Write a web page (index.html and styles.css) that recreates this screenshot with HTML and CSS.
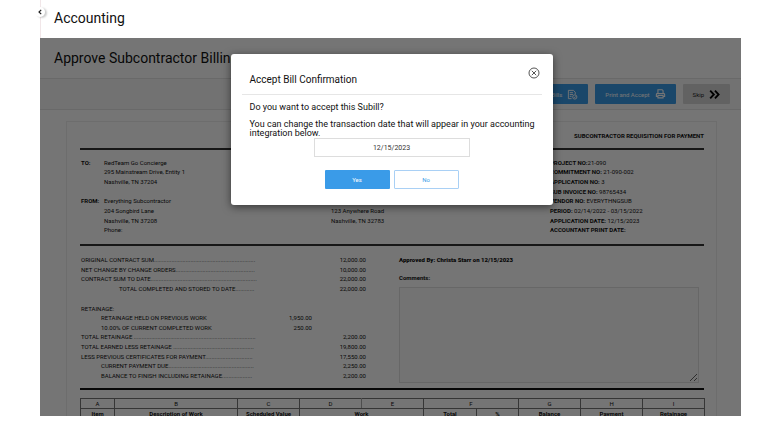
FILE: index.html
```html
<!DOCTYPE html>
<html lang="en">
<head>
<meta charset="utf-8">
<title>Accounting</title>
<link rel="stylesheet" href="styles.css">
</head>
<body>
<div class="app">
  <header class="topbar">
    <button class="collapse" aria-label="Collapse menu">
      <svg viewBox="0 0 10 10"><path d="M6.200 2.800 4 5l2.200 2.200" fill="none" stroke="#222" stroke-width="1.200"/></svg>
    </button>
    <h1>Accounting</h1>
  </header>
  <main class="page">
    <h2 class="page-title">Approve Subcontractor Billing</h2>
    <div class="toolbar">
      <button class="btn btn-primary">Bills
        <svg class="icon" viewBox="0 0 12 12" fill="none" stroke="currentColor" stroke-width="1"><path d="M5 10.500H1.500v-9h5.500l2 2V6M3 4h3.500M3 6h3.500M3 8h2"/><circle cx="8.500" cy="8.700" r="2.300"/><path d="m7.500 8.700.8.8 1.300-1.500"/></svg>
      </button>
      <button class="btn btn-primary">Print and Accept
        <svg class="icon" viewBox="0 0 12 12" fill="none" stroke="currentColor" stroke-width="1.200"><path d="M3.200 5V.8h4.600l1 1V5M3 8.200H1.500V5.900c0-.6.4-1 1-1h7c.6 0 1 .4 1 1v2.300H9M3.200 7h5.600v2.700H3.200z"/></svg>
      </button>
      <button class="btn btn-skip">Skip
        <svg class="icon" viewBox="0 0 12 12" fill="none" stroke="#000" stroke-width="2"><path d="m1.300 1.800 4 4.200-4 4.200M6.500 1.800l4 4.200-4 4.200"/></svg>
      </button>
    </div>
    <article class="sheet">
      <h3 class="sheet-title">SUBCONTRACTOR REQUISITION FOR PAYMENT</h3>
      <section class="parties">
        <div class="contacts">
          <div class="contact">
            <b>TO:</b><span>RedTeam Go Concierge</span>
            <span>295 Mainstream Drive, Entity 1</span>
            <span>Nashville, TN 37204</span>
          </div>
          <div class="contact">
            <b>FROM:</b><span>Everything Subcontractor</span>
            <span>204 Songbird Lane</span>
            <span>Nashville, TN 37208</span>
            <span>Phone:</span>
          </div>
        </div>
        <div class="rows">
          <span class="street">123 Anywhere Road</span>
          <span class="city">Nashville, TN 32783</span>
        </div>
        <div class="rows">
          <span><b>PROJECT NO:</b>21-090</span>
          <span><b>COMMITMENT NO:</b> 21-090-002</span>
          <span><b>APPLICATION NO:</b> 3</span>
          <span><b>SUB INVOICE NO:</b> 98765434</span>
          <span><b>VENDOR NO:</b> EVERYTHNGSUB</span>
          <span><b>PERIOD:</b> 02/14/2022 - 03/15/2022</span>
          <span><b>APPLICATION DATE:</b> 12/15/2023</span>
          <span><b>ACCOUNTANT PRINT DATE:</b></span>
        </div>
      </section>
      <section class="summary">
        <div class="totals">
          <span>ORIGINAL CONTRACT SUM................................................................</span><span class="sum">12,000.00</span>
          <span>NET CHANGE BY CHANGE ORDERS..................................................</span><span class="sum">10,000.00</span>
          <span>CONTRACT SUM TO DATE...................................................................</span><span class="sum">22,000.00</span>
          <span class="indent-2">TOTAL COMPLETED AND STORED TO DATE............</span><span class="sum">22,000.00</span>
          <span class="heading">RETAINAGE:</span>
          <span class="indent">RETAINAGE HELD ON PREVIOUS WORK</span><span class="part">1,950.00</span>
          <span class="indent">10.00% OF CURRENT COMPLETED WORK</span><span class="part">250.00</span>
          <span>TOTAL RETAINAGE .............................................................................</span><span class="sum">2,200.00</span>
          <span>TOTAL EARNED LESS RETAINAGE ...................................................</span><span class="sum">19,800.00</span>
          <span>LESS PREVIOUS CERTIFICATES FOR PAYMENT..............................</span><span class="sum">17,550.00</span>
          <span class="indent">CURRENT PAYMENT DUE......................................................</span><span class="sum">2,250.00</span>
          <span class="indent">BALANCE TO FINISH INCLUDING RETAINAGE...................</span><span class="sum">2,200.00</span>
        </div>
        <div class="approval">
          <b>Approved By: Christa Starr on 12/15/2023</b>
          <label for="comments">Comments:</label>
          <textarea id="comments"></textarea>
        </div>
      </section>
      <table class="items">
        <colgroup><col class="c-item"><col class="c-desc"><col><col><col><col class="c-total"><col class="c-pct"><col><col><col></colgroup>
        <tr><td>A</td><td>B</td><td>C</td><td class="open-right">D</td><td class="open-left">E</td><td colspan="2">F</td><td>G</td><td>H</td><td>I</td></tr>
        <tr><th>Item</th><th>Description of Work</th><th>Scheduled Value</th><th colspan="2">Work</th><th>Total</th><th>%</th><th>Balance</th><th>Payment</th><th>Retainage</th></tr>
      </table>
    </article>
    <div class="overlay">
      <div class="modal" role="dialog" aria-labelledby="dlg-title">
        <div class="modal-head">
          <h2 id="dlg-title">Accept Bill Confirmation</h2>
          <button class="close" aria-label="Close">
            <svg viewBox="0 0 12 12" fill="none" stroke="#555" stroke-width="1"><circle cx="6" cy="6" r="5"/><path d="m3.800 3.800 4.400 4.400m0-4.400L3.800 8.200"/></svg>
          </button>
        </div>
        <div class="modal-body">
          <p>Do you want to accept this Subill?</p>
          <p>You can change the transaction date that will appear in your accounting integration below.</p>
          <input class="date" type="text" value="12/15/2023" aria-label="Transaction date">
          <div class="actions">
            <button class="yes">Yes</button>
            <button class="no">No</button>
          </div>
        </div>
      </div>
    </div>
  </main>
</div>
</body>
</html>
```
FILE: styles.css
```css
* { box-sizing: border-box; }
body {
  margin: 0;
  background: #fff;
  color: #111;
  font-family: Roboto, "Liberation Sans", sans-serif;
  font-size: 6px;
}
h1, h2, h3, p { margin: 0; font-weight: 400; }
button, input, textarea { font-family: inherit; margin: 0; }
button { padding: 0; border: 0; background: none; }
svg { display: block; }

.app {
  display: flex;
  flex-direction: column;
  height: 100vh;
  padding: 0 21px 15px 40px;
}
.topbar {
  position: relative;
  flex: none;
  display: flex;
  align-items: center;
  height: 38px;
  padding: 0 13px 2px;
  border-left: 1px solid #f1e6e8;
}
h1, .page-title { font-size: 14px; line-height: 16px; }
.collapse {
  position: absolute;
  left: -6px;
  top: 7px;
  width: 10px;
  height: 10px;
  border-radius: 50%;
  background: #fff;
  box-shadow: 2px 1px 2px #0003;
}

.page { position: relative; flex: 1; min-height: 0; overflow: hidden; }
.page-title { height: 40px; padding: 12px 14px; }
.toolbar {
  display: flex;
  justify-content: flex-end;
  align-items: center;
  gap: 7px;
  height: 32px;
  padding: 0 11px;
  background: #f8f8f8;
  border: solid #e4e4e4;
  border-width: 1px 0;
}
.btn {
  display: flex;
  align-items: center;
  justify-content: center;
  gap: 5px;
  height: 20px;
  padding: 0 10px;
  border-radius: 1px;
  font-size: 6px;
}
.btn-primary { background: #3a9be8; color: #fff; }
.btn-skip { background: #d6d6d6; color: #222; }
.icon { width: 11px; height: 11px; }

.sheet {
  margin: 11px 24px 0 26px;
  padding: 0 12px 0 13px;
  border: 1px solid #eee;
}
.sheet-title {
  height: 28px;
  padding-top: 10px;
  border-bottom: 2px solid #333;
  font-size: 6px;
  line-height: 8px;
  font-weight: 700;
  text-align: right;
}
.parties {
  display: grid;
  grid-template-columns: 251fr 219fr 154fr;
  height: 96px;
  padding: 8px 0 9px;
  border-bottom: 2px solid #333;
}
.rows { display: grid; grid-template-rows: repeat(8, 1fr); align-items: center; line-height: 8px; }
.contacts { display: grid; grid-template-rows: 1fr 1fr; padding-left: 1px; line-height: 8px; }
.contact {
  display: grid;
  grid-template-columns: 23px 1fr;
  grid-template-rows: repeat(4, 1fr);
  align-items: center;
}
.contact span { grid-column: 2; }
.street { grid-row: 6; }
.city { grid-row: 7; }

.summary {
  display: grid;
  grid-template-columns: 319fr 305fr;
  height: 144px;
  padding: 9px 0 5px;
  border-bottom: 2px solid #111;
}
.totals {
  display: grid;
  grid-template-columns: 180px 51px 54px;
  grid-template-rows: repeat(13, 1fr);
  align-items: center;
  height: 126px;
  padding-left: 1px;
  line-height: 8px;
  white-space: nowrap;
}
.totals span { grid-column: 1; }
.totals .sum { grid-column: 3; text-align: right; }
.totals .part { grid-column: 2; text-align: right; }
.heading { grid-row: span 2; align-self: end; }
.indent { padding-left: 20px; }
.indent-2 { padding-left: 38px; }
.approval {
  display: flex;
  flex-direction: column;
  padding: 1px 5px 0 0;
  line-height: 8px;
  font-weight: 700;
}
.approval label { margin: 10px 0 5px; }
.approval textarea {
  flex: 1;
  width: 100%;
  border: 1px solid #e0e0e0;
  background: #fafafa;
  resize: vertical;
}

.items {
  width: 100%;
  margin-top: 8px;
  table-layout: fixed;
  border-collapse: collapse;
  text-align: center;
}
.items td, .items th { height: 10px; padding: 0; border: 1px solid #777; line-height: 8px; }
.items col { width: 62px; }
.items .c-item { width: 34px; }
.items .c-desc { width: 123px; }
.items .c-total { width: 53px; }
.items .c-pct { width: 42px; }
.items .open-right { border-right-color: #aaa; }
.items .open-left { border-left-color: #aaa; }

.overlay {
  position: absolute;
  inset: 0;
  display: flex;
  align-items: flex-start;
  justify-content: center;
  padding: 16px 0 0 2px;
  background: rgba(0, 0, 0, .54);
}
.modal {
  width: 322px;
  padding: 0 11px 16px;
  border-radius: 3px;
  background: #fff;
  box-shadow: 0 2px 8px #0008;
}
.modal-head {
  display: flex;
  justify-content: space-between;
  height: 41px;
  padding: 13px 2px 0 8px;
  border-bottom: 1px solid #e6e6e6;
}
.modal-head h2 { padding-top: 7px; font-size: 10px; line-height: 12px; }
.close, .close svg { width: 12px; height: 12px; }
.modal-body { font-size: 9px; line-height: 9px; }
.modal-body p { margin: 8px 0 0 8px; }
.date {
  display: block;
  width: 156px;
  height: 19px;
  margin: 0 auto;
  padding: 0;
  border: 1px solid #ddd;
  color: #333;
  font-size: 7px;
  text-align: center;
}
.actions { display: flex; justify-content: center; gap: 4px; margin-top: 13px; }
.actions button { width: 65px; height: 19px; border-radius: 1px; font-size: 6px; }
.yes { background: #3a9be8; color: #fff; }
.actions .no { border: 1px solid #a9d0f5; color: #3a9be8; }
```
